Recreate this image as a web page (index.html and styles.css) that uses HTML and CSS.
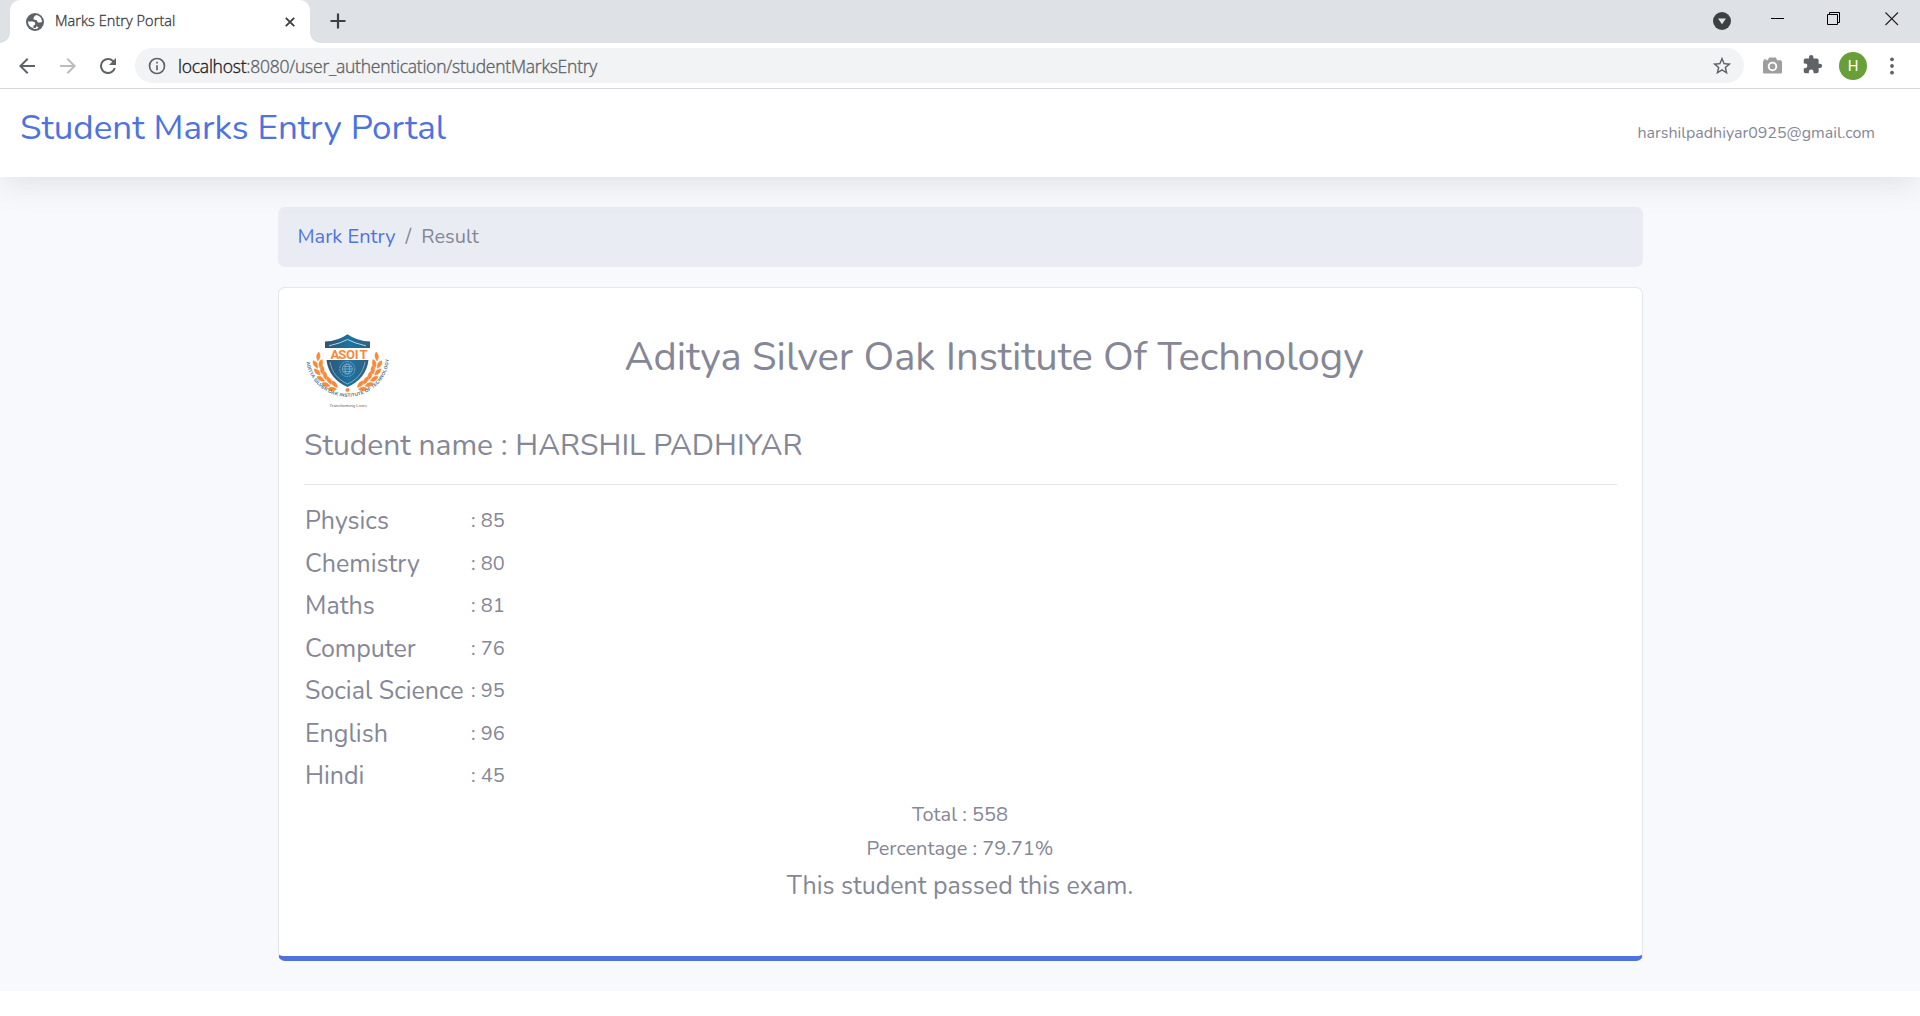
FILE: index.html
```html
<!DOCTYPE html>
<html lang="en">
<head>
<meta charset="utf-8">
<title>Marks Entry Portal</title>
<link rel="stylesheet" href="styles.css">
</head>
<body>
<div class="tabstrip">
  <div class="tab">
    <svg class="globe" viewBox="0 0 18 18"><circle cx="9" cy="9" r="9" fill="#5f6368"/><path d="M10.2 1.9C8.6 3 7.7 3.9 7.5 5.2c-.2 1.2.8 1.7 2.1 1.7 1.2 0 1.5.7 1.7 1.5.3 1 1.300 1.200 2.300 1 1-.2 1.900-.4 2.500-.5a7.100 7.100 0 0 0-5.900-7zM1.900 8.500h4.600c1.700 0 2.700.9 2.700 2.200 0 1-.6 1.500-1.700 1.500v3.700c2.300.4 3.900-.2 5-1.200-.6-.8-1.500-1-2.400-1.100l-.3 1.500H7.300A7.200 7.200 0 0 1 1.900 8.500z" fill="#fff"/></svg>
    <span class="tab-title">Marks Entry Portal</span>
    <svg class="tab-close" viewBox="0 0 10 10"><path d="M.8.8l8.400 8.400M9.200.8L.8 9.200" stroke="#3c4043" stroke-width="1.900"/></svg>
  </div>
  <svg class="new-tab" viewBox="0 0 16 16"><path d="M8 .5v15M.5 8h15" stroke="#3c4043" stroke-width="2.200"/></svg>
  <div class="window-controls">
    <svg width="18" height="18" viewBox="0 0 18 18"><circle cx="9" cy="9" r="9" fill="#3c4043"/><path d="M5 6.500h8L9 12.300z" fill="#dee1e6"/></svg>
    <svg class="minimize" width="13" height="14" viewBox="0 0 13 14"><path d="M0 6.500h13" stroke="#000"/></svg>
    <svg class="restore" width="14" height="14" viewBox="0 0 14 14"><path d="M.5 2.500h10v10H.5zM2.500 2.500v-2h10v10h-2" fill="none" stroke="#000"/></svg>
    <svg class="close" width="14" height="14" viewBox="0 0 14 14"><path d="M.5.5l12.500 12.500M13 .5L.5 13" stroke="#222" stroke-width="1.100"/></svg>
  </div>
</div>
<div class="toolbar">
  <svg class="nav back" viewBox="0 0 24 24"><path d="M20 11H7.830l5.590-5.590L12 4l-8 8 8 8 1.410-1.410L7.830 13H20z"/></svg>
  <svg class="nav forward" viewBox="0 0 24 24"><path d="M4 11h12.170l-5.590-5.590L12 4l8 8-8 8-1.410-1.410L16.170 13H4z"/></svg>
  <svg class="nav reload" viewBox="0 0 24 24"><path d="M17.650 6.350A7.960 7.960 0 0 0 12 4a8 8 0 1 0 7.730 10h-2.080A6 6 0 1 1 12 6c1.660 0 3.140.69 4.220 1.780L13 11h7V4z"/></svg>
  <div class="omnibox">
    <svg class="info" viewBox="0 0 24 24"><path d="M11 17h2v-6h-2zm1-15a10 10 0 1 0 0 20 10 10 0 0 0 0-20zm0 18a8 8 0 1 1 0-16 8 8 0 0 1 0 16zM11 9h2V7h-2z"/></svg>
    <span class="url"><span class="host">localhost</span>:8080/user_authentication/studentMarksEntry</span>
    <svg class="star" viewBox="0 0 24 24"><path d="M22 9.240l-7.190-.62L12 2 9.190 8.630 2 9.240l5.460 4.730L5.820 21 12 17.270 18.180 21l-1.630-7.030zM12 15.400l-3.760 2.270 1-4.280-3.320-2.880 4.380-.38L12 6.100l1.710 4.040 4.380.38-3.320 2.880 1 4.280z"/></svg>
  </div>
  <svg class="camera" viewBox="0 0 20 17"><path d="M0 4.500L1 3V2h2.500v1H5l1.500-3h7L15 3h4l1 1.500V16l-1 1H1l-1-1z" fill="#9e9e9e"/><circle cx="10" cy="9.500" r="4" fill="#9e9e9e" stroke="#fff" stroke-width="2"/></svg>
  <svg class="puzzle" viewBox="0 0 24 24"><path d="M20.500 11H19V7a2 2 0 0 0-2-2h-4V3.500a2.500 2.500 0 0 0-5 0V5H4a2 2 0 0 0-2 2v3.800h1.500a2.700 2.700 0 0 1 0 5.400H2V20a2 2 0 0 0 2 2h3.800v-1.500a2.700 2.700 0 0 1 5.400 0V22H17a2 2 0 0 0 2-2v-4h1.500a2.500 2.500 0 0 0 0-5z"/></svg>
  <span class="avatar">H</span>
  <svg class="dots" viewBox="0 0 4 18"><circle cx="2" cy="2.300" r="1.900"/><circle cx="2" cy="9" r="1.900"/><circle cx="2" cy="15.700" r="1.900"/></svg>
</div>
<header class="topbar">
  <h1>Student Marks Entry Portal</h1>
  <span class="email">harshilpadhiyar0925@gmail.com</span>
</header>
<main class="content">
  <nav class="breadcrumb">
    <a>Mark Entry</a><span class="slash">/</span><span>Result</span>
  </nav>
  <section class="card">
    <div class="card-head">
      <svg class="logo" viewBox="0 0 96 90">
        <defs>
          <linearGradient id="blue" x1="0" x2="1"><stop offset="0" stop-color="#315373"/><stop offset=".55" stop-color="#1b74a0"/><stop offset="1" stop-color="#315d80"/></linearGradient>
          <path id="leaf" d="M50 66q-2.500 5-8 3.500q1.500-5 8-3.500M50 64q-2.500-5-8-3.500q1.500 5 8 3.500"/>
        </defs>
        <path d="M47.500 9.200Q57 16 70 16.500V23H25V16.500Q38 16 47.500 9.200z" fill="url(#blue)"/>
        <path d="M29 20.800Q40 18.500 47.500 14.500Q55 18.500 66 20.800" fill="none" stroke="#d9edf5" stroke-width=".8"/>
        <text y="34" class="logo-name" x="30.500 38.300 46 54.800 59.500">ASOIT</text>
        <path d="M26.500 35h42C67 48 59 57 47.500 62C36 57 28 48 26.500 35z" fill="url(#blue)"/>
        <path d="M30 37C32 48 38 54.500 47.500 59C57 54.500 63 48 65 37" fill="none" stroke="#a5c5d5" stroke-width=".7"/>
        <g fill="none" stroke="#8fb9d2" stroke-width=".7"><circle cx="47.300" cy="44" r="7.500" stroke-dasharray="2 .7"/><circle cx="47.300" cy="44" r="5"/><ellipse cx="47.300" cy="44" rx="2.300" ry="5"/><path d="M42.300 44h10M43.300 41.500h8M43.300 46.500h8"/></g>
        <g fill="#f58a3c" stroke="#f58a3c" stroke-width=".5">
          <g id="branch">
            <use href="#leaf" transform="rotate(26 47 36)"/>
            <use href="#leaf" transform="rotate(40 47 36)"/>
            <use href="#leaf" transform="rotate(54 47 36)"/>
            <use href="#leaf" transform="rotate(68 47 36)"/>
            <use href="#leaf" transform="rotate(82 47 36)"/>
            <path d="M50 65q-5-3.500-9 0q4 3.500 9 0" transform="rotate(96 47 36)"/>
          </g>
          <use href="#branch" transform="translate(95) scale(-1 1)"/>
          <circle cx="47.500" cy="65" r="1.800"/>
        </g>
        <path id="ring" d="M6.300 35A41.300 39.500 0 0 0 88.700 35" fill="none"/>
        <text class="logo-ring"><textPath href="#ring" startOffset="2" textLength="120" lengthAdjust="spacing">ADITYA SILVER OAK INSTITUTE OF TECHNOLOGY</textPath></text>
        <text x="48" y="82" class="logo-motto">Transforming Lives</text>
      </svg>
      <h2>Aditya Silver Oak Institute Of Technology</h2>
    </div>
    <h3>Student name : HARSHIL PADHIYAR</h3>
    <hr>
    <div class="marks">
      <span class="subject">Physics</span><span>: 85</span>
      <span class="subject">Chemistry</span><span>: 80</span>
      <span class="subject">Maths</span><span>: 81</span>
      <span class="subject">Computer</span><span>: 76</span>
      <span class="subject">Social Science</span><span>: 95</span>
      <span class="subject">English</span><span>: 96</span>
      <span class="subject">Hindi</span><span>: 45</span>
    </div>
    <div class="summary">
      <p>Total : 558</p>
      <p>Percentage : 79.71%</p>
      <p class="verdict">This student passed this exam.</p>
    </div>
  </section>
</main>
</body>
</html>
```
FILE: styles.css
```css
* { box-sizing: border-box; margin: 0; padding: 0; }
body {
  background: #fff;
  color: #858796;
  font: 400 20px "Nunito", "Noto Sans", sans-serif;
  height: 1016px;
  overflow: hidden;
}
h1, h2, h3 { font-weight: 400; white-space: nowrap; }
svg { display: block; flex: none; }

/* Browser frame */
.tabstrip { display: flex; height: 43px; background: #dee1e6; padding-left: 10px; }
.tab {
  position: relative;
  display: flex;
  align-items: center;
  width: 300px;
  height: 43px;
  padding: 0 15px 0 16px;
  background: #fff;
  border-radius: 10px 10px 0 0;
}
.tab::before, .tab::after { content: ""; position: absolute; bottom: 0; width: 10px; height: 10px; }
.tab::before { left: -10px; background: radial-gradient(circle at 0 0, #dee1e6 9.500px, #fff 10px); }
.tab::after { right: -10px; background: radial-gradient(circle at 100% 0, #dee1e6 9.500px, #fff 10px); }
.globe { width: 18px; height: 18px; }
.tab-title { margin-left: 11px; padding-bottom: 2px; font: 300 14.500px "Open Sans", sans-serif; letter-spacing: .06px; color: #3c4043; -webkit-text-stroke: .35px; }
.tab-close { width: 10px; height: 10px; margin-left: auto; }
.new-tab { width: 16px; height: 16px; margin: 13px 0 0 19.500px; }
.window-controls { display: flex; align-items: flex-start; margin-left: auto; padding: 12px 21px 0 0; }
.minimize { margin-left: 40px; }
.restore { margin-left: 43px; }
.close { margin-left: 44px; }
.toolbar { display: flex; align-items: center; height: 46px; padding: 0 25px 0 15px; border-bottom: 1px solid #d5d7da; fill: #5f6368; }
.nav { width: 24px; height: 24px; }
.forward { margin-left: 17px; fill: #babcbe; }
.reload { margin-left: 16px; }
.omnibox { display: flex; align-items: center; width: 1610px; height: 35px; margin-left: 15px; padding: 0 11px 0 12px; border-radius: 18px; background: #f1f3f4; }
.info { width: 20px; height: 20px; }
.url { margin-left: 11px; font: 300 17.500px/24px "Open Sans", sans-serif; letter-spacing: -.23px; color: #5f6368; -webkit-text-stroke: .35px; }
.host { color: #202124; }
.star { width: 22px; height: 22px; margin-left: auto; }
.camera { width: 19px; height: 17px; margin-left: 19px; }
.puzzle { width: 21px; height: 21px; margin: 0 0 2px 20px; }
.avatar { width: 28px; height: 28px; margin-left: 16px; border-radius: 50%; background: #689f38; color: #fff; font: 400 15px/28px Roboto, sans-serif; text-align: center; }
.dots { width: 4px; height: 18px; margin-left: 23px; margin-right: 1px; }

/* Page */
.topbar {
  position: relative;
  z-index: 1;
  display: flex;
  justify-content: space-between;
  height: 88px;
  padding: 18px 45px 0 20px;
  background: #fff;
  box-shadow: 0 3px 35px 0 rgba(58, 59, 69, .15);
  clip-path: inset(0 0 -60px 0);
}
h1 { font-size: 35px; line-height: 42px; color: #4e73df; }
.email { margin-top: 14px; font-size: 16px; line-height: 24px; }
.content { height: 814px; padding: 30px 277px 0 278px; background: #f8f9fc; }
.breadcrumb { display: flex; height: 60px; padding: 15px 19.500px; border-radius: 7px; background: #eaecf4; line-height: 30px; }
.breadcrumb a { color: #4e73df; }
.slash { margin: 0 10px; }
.card { height: 674px; margin-top: 20px; padding: 37px 25px 0; background: #fff; border: 1px solid #e3e6f0; border-bottom: 5px solid #4e73df; border-radius: 7px; }
.card-head { display: flex; height: 103px; }
.logo { width: 96px; height: 90px; margin-left: -4px; }
.logo-name { font: 700 13px Roboto, sans-serif; fill: #f58a3c; }
.logo-ring { font: 700 4.700px "Liberation Sans", sans-serif; fill: #4e7488; }
.logo-motto { font: 400 4.400px "Liberation Sans", sans-serif; fill: #666; text-anchor: middle; }
h2 { margin: 8px 0 0 228.500px; font-size: 40px; line-height: 48px; }
h3 { font-size: 30px; line-height: 36px; }
hr { height: 1px; margin: 20px 0 15px; border: 0; background: #e3e3e5; }
.marks { display: grid; grid-template-columns: 166px auto; grid-auto-rows: 42.500px; padding-left: 1px; line-height: 42.500px; }
.subject { font-size: 25px; }
.summary { padding-right: 1px; text-align: center; line-height: 34px; }
.verdict { margin-top: 5px; font-size: 25px; line-height: 30px; }
```
